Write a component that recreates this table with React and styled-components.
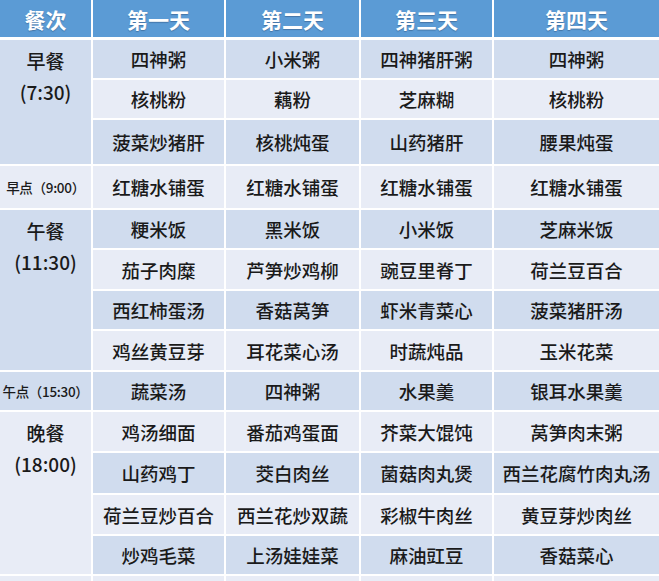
import React from 'react';
import styled, { createGlobalStyle } from 'styled-components';

const GlobalStyle = createGlobalStyle`
  html, body {
    margin: 0;
    padding: 0;
    background: #ffffff;
  }
  body {
    font-family: "Noto Sans CJK SC", "Noto Sans", sans-serif;
    color: #1a1a1a;
  }
`;

const DARK = '#d0dcee';
const LIGHT = '#e8ecf6';

// row heights measured off the screenshot (body rows, without grid lines)
const rowHeights = [38, 38, 44, 42, 38, 39, 38, 39, 38, 39, 40, 39, 38, 30];

const Frame = styled.div`
  width: 659px;
  height: 581px;
  overflow: hidden;
`;

const Table = styled.div`
  display: grid;
  grid-template-columns: 91px 131px 133px 131px 165px;
  grid-template-rows: 38px ${rowHeights.map((h) => `${h}px`).join(' ')};
  column-gap: 2px;
  row-gap: 2px;
  background: #ffffff;
`;

const HeadCell = styled.div`
  background: #5b9bd5;
  color: #ffffff;
  font-size: 21px;
  font-weight: 700;
  display: flex;
  align-items: center;
  justify-content: center;
  text-shadow: 0 1px 1px rgba(40, 70, 110, 0.45);
  margin-bottom: 1px;
`;

const MealCell = styled.div`
  grid-row: span ${(p) => p.$span};
  background: ${(p) => (p.$dark ? DARK : LIGHT)};
  display: flex;
  flex-direction: column;
  align-items: center;
  padding-top: 5px;
  font-size: 19px;
  font-weight: 500;
  line-height: 31px;
`;

const SnackCell = styled.div`
  background: ${(p) => (p.$dark ? DARK : LIGHT)};
  display: flex;
  align-items: center;
  justify-content: center;
  font-size: 13.5px;
  font-weight: 500;
  white-space: nowrap;
  letter-spacing: -0.3px;
`;

const DishCell = styled.div`
  background: ${(p) => (p.$dark ? DARK : LIGHT)};
  display: flex;
  align-items: center;
  justify-content: center;
  font-size: 18.5px;
  font-weight: 500;
  white-space: nowrap;
`;

const days = ['第一天', '第二天', '第三天', '第四天'];

const groups = [
  {
    label: ['早餐', '(7:30)'],
    rows: [
      ['四神粥', '小米粥', '四神猪肝粥', '四神粥'],
      ['核桃粉', '藕粉', '芝麻糊', '核桃粉'],
      ['菠菜炒猪肝', '核桃炖蛋', '山药猪肝', '腰果炖蛋'],
    ],
  },
  {
    snack: '早点（9:00）',
    rows: [['红糖水铺蛋', '红糖水铺蛋', '红糖水铺蛋', '红糖水铺蛋']],
  },
  {
    label: ['午餐', '(11:30)'],
    rows: [
      ['粳米饭', '黑米饭', '小米饭', '芝麻米饭'],
      ['茄子肉糜', '芦笋炒鸡柳', '豌豆里脊丁', '荷兰豆百合'],
      ['西红柿蛋汤', '香菇莴笋', '虾米青菜心', '菠菜猪肝汤'],
      ['鸡丝黄豆芽', '耳花菜心汤', '时蔬炖品', '玉米花菜'],
    ],
  },
  {
    snack: '午点（15:30）',
    rows: [['蔬菜汤', '四神粥', '水果羹', '银耳水果羹']],
  },
  {
    label: ['晚餐', '(18:00)'],
    rows: [
      ['鸡汤细面', '番茄鸡蛋面', '芥菜大馄饨', '莴笋肉末粥'],
      ['山药鸡丁', '茭白肉丝', '菌菇肉丸煲', '西兰花腐竹肉丸汤'],
      ['荷兰豆炒百合', '西兰花炒双蔬', '彩椒牛肉丝', '黄豆芽炒肉丝'],
      ['炒鸡毛菜', '上汤娃娃菜', '麻油豇豆', '香菇菜心'],
    ],
  },
  {
    label: [],
    rows: [['', '', '', '']],
  },
];

export default function App() {
  let index = 0;
  const cells = [];

  groups.forEach((group, gi) => {
    const first = index;
    group.rows.forEach((row, ri) => {
      const dark = index % 2 === 0;
      if (ri === 0) {
        if (group.snack) {
          cells.push(
            <SnackCell key={`s${gi}`} $dark={dark}>
              {group.snack}
            </SnackCell>
          );
        } else {
          cells.push(
            <MealCell key={`m${gi}`} $span={group.rows.length} $dark={first % 2 === 0}>
              {group.label.map((line) => (
                <span key={line}>{line}</span>
              ))}
            </MealCell>
          );
        }
      }
      row.forEach((dish, di) => {
        cells.push(
          <DishCell key={`d${index}-${di}`} $dark={dark}>
            {dish}
          </DishCell>
        );
      });
      index += 1;
    });
  });

  return (
    <>
      <GlobalStyle />
      <Frame>
        <Table>
          <HeadCell>餐次</HeadCell>
          {days.map((d) => (
            <HeadCell key={d}>{d}</HeadCell>
          ))}
          {cells}
        </Table>
      </Frame>
    </>
  );
}
